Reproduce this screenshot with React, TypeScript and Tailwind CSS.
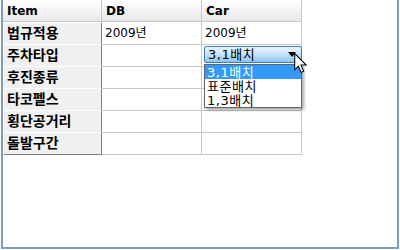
import React, { FC } from 'react'

const rows = [
  { label: '법규적용', db: '2009년', car: '2009년' },
  { label: '주차타입', db: '', car: 'combo' },
  { label: '후진종류', db: '', car: '' },
  { label: '타코펠스', db: '', car: '' },
  { label: '횡단공거리', db: '', car: '' },
  { label: '돌발구간', db: '', car: '' },
]

const options = ['3,1배치', '표준배치', '1,3배치']

const font = { fontFamily: 'Tahoma, "DejaVu Sans", "Noto Sans CJK KR", sans-serif' }

const ComboBox: FC = () => {
  return (
    <div className="relative h-full w-full py-[2px] pl-[1px]">
      <div className="flex h-[17px] w-[98px] items-center justify-between rounded-[2px] border border-[#3c7fb1] bg-gradient-to-b from-[#e8f4fc] via-[#c4e3f8] to-[#8ac3ec] pl-[3px] pr-[5px] text-[13px] tracking-[0.5px] text-black">
        <span className="leading-none">{options[0]}</span>
        <span className="h-0 w-0 border-l-[4px] border-r-[4px] border-t-[5px] border-l-transparent border-r-transparent border-t-black" />
      </div>

      <div className="absolute left-[1px] top-[20px] z-10 w-[98px] border border-[#646464] bg-white shadow-[2px_2px_3px_rgba(0,0,0,0.35)]">
        {options.map((opt, i) => (
          <div
            className={`flex h-[14px] items-center pl-[2px] text-[13px] leading-none tracking-[0.5px] ${i === 0 ? 'bg-[#3399ff] text-white' : 'text-black'}`}
            key={opt}
          >
            {opt}
          </div>
        ))}
      </div>

      <svg className="absolute left-[91px] top-[9px] z-20" height="22" viewBox="0 0 13 21" width="14">
        <path d="M0.5 0.5 L0.5 16 L4 12.5 L6.5 18.5 L9 17.5 L6.5 11.5 L11.5 11.5 Z" fill="white" stroke="black" strokeWidth="1" />
      </svg>
    </div>
  )
}

const App: FC = () => {
  return (
    <div className="h-[250px] w-[400px] overflow-hidden bg-white" style={font}>
      <div className="ml-[1px] h-[249px] w-[398px] border-b-2 border-l-2 border-r-2 border-[#7f9db9]">
        <div className="w-[300px]">
          <div className="grid h-[22px] grid-cols-[99px_100px_100px]">
            {['Item', 'DB', 'Car'].map(h => (
              <div
                className="flex items-center border-b border-r border-[#c8c8c8] bg-gradient-to-b from-white to-[#e8e8e8] pl-[4px] text-[12px] font-bold text-black"
                key={h}
              >
                {h}
              </div>
            ))}
          </div>

          {rows.map(row => (
            <div className="grid h-[22px] grid-cols-[99px_100px_100px]" key={row.label}>
              <div className="flex items-center border-b border-r border-l border-t border-b-[#808080] border-l-white border-r-[#808080] border-t-white bg-[#f0f0f0] pl-[3px] text-[14px] font-bold text-black">
                {row.label}
              </div>
              <div className="flex items-center border-b border-r border-[#c8c8c8] pl-[3px] text-[12px] text-black">
                {row.db}
              </div>
              <div className="flex items-center border-b border-r border-[#c8c8c8] pl-[1px] text-[12px] text-black">
                {row.car === 'combo' ? <ComboBox /> : <span className="pl-[2px]">{row.car}</span>}
              </div>
            </div>
          ))}
        </div>
      </div>
    </div>
  )
}

export default App
